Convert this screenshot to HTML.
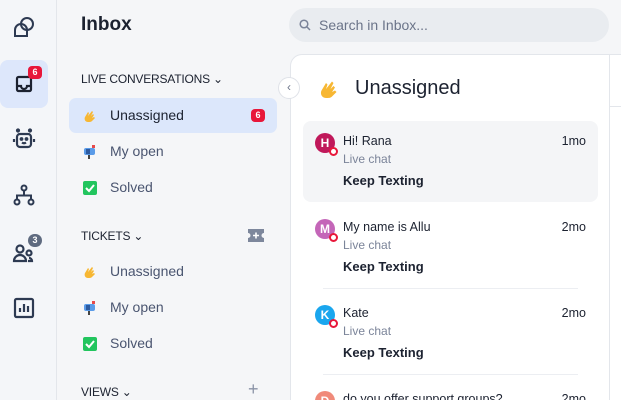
<!DOCTYPE html>
<html><head><meta charset="utf-8"><style>
*{margin:0;padding:0;box-sizing:border-box}
html{width:621px;height:400px;overflow:hidden;background:#f5f6f8}
body{width:621px;height:400px;overflow:hidden;background:#f5f6f8;font-family:"Liberation Sans",sans-serif;position:relative;color:#1c2230}
.abs{position:absolute}
.rail{left:0;top:0;width:57px;height:400px;background:#f4f6f9;border-right:1px solid #e3e6eb}
.ic{position:absolute;left:12px;width:24px;height:24px}
.mid{left:57px;top:0;width:233px;height:400px;background:#f5f6f8}
.sec{position:absolute;left:24px;font-size:12px;color:#1c2230;letter-spacing:-.2px}
.item{position:absolute;left:12px;width:208px;height:35px;border-radius:7px;font-size:14px;color:#4a5570}
.item span{position:absolute;left:41px;top:9px}
.item svg{position:absolute;left:13px;top:10px}
.badge{background:#e8173a;color:#fff;font-size:9px;font-weight:bold;border-radius:4px;text-align:center;line-height:13px}
.card{left:290px;top:54px;width:331px;height:346px;background:#fff;border-top:1px solid #e3e6eb;border-left:1px solid #e3e6eb;border-top-left-radius:12px}
.conv{position:absolute;left:12px;width:295px;height:81px;border-radius:8px}
.av{position:absolute;left:12px;top:12px;width:20px;height:20px;border-radius:50%;color:#fff;font-size:12px;font-weight:bold;text-align:center;line-height:20px}
.av i{position:absolute;right:-3px;bottom:-3px;width:9px;height:9px;border-radius:50%;background:#fff;border:2.5px solid #e8173a}
.nm{position:absolute;left:40px;top:13px;font-size:12.5px;color:#1c2230}
.tm{position:absolute;right:12px;top:13px;font-size:12.5px;color:#1c2230}
.lc{position:absolute;left:40px;top:31px;font-size:12px;color:#7b8499}
.kt{position:absolute;left:40px;top:52px;font-size:13px;font-weight:bold;color:#1c2230}
.sep{position:absolute;left:32px;width:255px;height:1px;background:#eceef2}
</style></head><body>
<div class="abs rail">
 <svg class="ic" style="top:15px" viewBox="0 0 24 24" fill="none" stroke="#2d3a52" stroke-width="2"><circle cx="15" cy="9" r="6"/><path d="M3 21v-6a6 6 0 0 1 12 0v6z"/></svg>
 <div class="abs" style="left:0;top:60px;width:48px;height:48px;background:#dde7fb;border-radius:8px"></div>
 <svg class="ic" style="top:72px" viewBox="0 0 24 24" fill="none" stroke="#1c2230" stroke-width="2.2"><rect x="5" y="5" width="14" height="14" rx="1.5"/><path d="M5 14h4a3 3 0 0 0 6 0h4"/></svg>
 <div class="abs badge" style="left:28px;top:66px;width:14px;height:13px">6</div>
 <svg class="ic" style="top:127px" viewBox="0 0 24 24" fill="none" stroke="#2d3a52" stroke-width="2.2"><rect x="5" y="7" width="14" height="13" rx="3"/><circle cx="6" cy="3.5" r="1" fill="#2d3a52"/><circle cx="18" cy="3.5" r="1" fill="#2d3a52"/><circle cx="9.5" cy="12" r=".8" fill="#2d3a52"/><circle cx="14.5" cy="12" r=".8" fill="#2d3a52"/><path d="M10 15.5q2 1.5 4 0M2 12v3M22 12v3"/></svg>
 <svg class="ic" style="top:183px" viewBox="0 0 24 24" fill="none" stroke="#2d3a52" stroke-width="2"><circle cx="12" cy="5" r="2.5"/><circle cx="5" cy="19" r="2.5"/><circle cx="19" cy="19" r="2.5"/><path d="M12 7.5v5M5 16.5v-4h14v4"/></svg>
 <svg class="ic" style="top:240px" viewBox="0 0 24 24" fill="none" stroke="#2d3a52" stroke-width="2.2"><circle cx="8" cy="9" r="3.5"/><path d="M2 21a6 6 0 0 1 12 0z"/><circle cx="17" cy="13" r="2.5"/><path d="M17 18a3 3 0 0 1 3 3h-4"/></svg>
 <div class="abs badge" style="left:28px;top:234px;width:14px;height:13px;background:#5f6b80;border-radius:7px">3</div>
 <svg class="ic" style="top:296px" viewBox="0 0 24 24" fill="none" stroke="#2d3a52" stroke-width="2.2"><rect x="3" y="3" width="18" height="18" rx="1.5"/><path d="M8 16v-4M12 16V8M16 16v-6"/></svg>
</div>
<div class="abs mid">
 <div class="abs" style="left:24px;top:14px;font-size:19px;font-weight:bold;color:#1c2230">Inbox</div>
 <div class="sec" style="top:72px">LIVE CONVERSATIONS ⌄</div>
 <div class="item" style="top:98px;background:#dce7fb;color:#1c2230"><svg width="16" height="16" viewBox="0 0 16 16"><path d="M6 14c-3 0-4-3-3-5l3-5 1 1-1 3 4-5 1 1-2 4 2-2 1 1-2 3 2-1 1 1-3 3c-1 1-2 1-4 1z" fill="#f7b733"/></svg><span>Unassigned</span><div class="abs badge" style="left:182px;top:11px;width:14px;height:13px">6</div></div>
 <div class="item" style="top:134px"><svg width="16" height="16" viewBox="0 0 16 16"><rect x="2" y="4" width="11" height="7" rx="2" fill="#5a9be8"/><rect x="4" y="5" width="4" height="5" fill="#2c5aa0"/><rect x="6" y="11" width="2" height="4" fill="#444"/><rect x="10" y="1" width="3" height="3" fill="#e84a4a"/></svg><span>My open</span></div>
 <div class="item" style="top:170px"><svg width="16" height="16" viewBox="0 0 16 16"><rect x="1" y="1" width="14" height="14" rx="2" fill="#22c55e"/><path d="M4 8l3 3 5-6" stroke="#fff" stroke-width="2" fill="none"/></svg><span>Solved</span></div>
 <div class="sec" style="top:229px">TICKETS ⌄</div>
 <svg class="abs" style="left:191px;top:229px" width="16" height="13" viewBox="0 0 16 13"><path d="M0 0h16v4a2.5 2.5 0 0 0 0 5v4H0V9a2.5 2.5 0 0 0 0-5z" fill="#7d879c"/><path d="M8 3.5v6M5 6.5h6" stroke="#fff" stroke-width="1.6"/></svg>
 <div class="item" style="top:254px"><svg width="16" height="16" viewBox="0 0 16 16"><path d="M6 14c-3 0-4-3-3-5l3-5 1 1-1 3 4-5 1 1-2 4 2-2 1 1-2 3 2-1 1 1-3 3c-1 1-2 1-4 1z" fill="#f7b733"/></svg><span>Unassigned</span></div>
 <div class="item" style="top:290px"><svg width="16" height="16" viewBox="0 0 16 16"><rect x="2" y="4" width="11" height="7" rx="2" fill="#5a9be8"/><rect x="4" y="5" width="4" height="5" fill="#2c5aa0"/><rect x="6" y="11" width="2" height="4" fill="#444"/><rect x="10" y="1" width="3" height="3" fill="#e84a4a"/></svg><span>My open</span></div>
 <div class="item" style="top:326px"><svg width="16" height="16" viewBox="0 0 16 16"><rect x="1" y="1" width="14" height="14" rx="2" fill="#22c55e"/><path d="M4 8l3 3 5-6" stroke="#fff" stroke-width="2" fill="none"/></svg><span>Solved</span></div>
 <div class="sec" style="top:385px">VIEWS ⌄</div>
 <div class="abs" style="left:191px;top:379px;font-size:18px;color:#8a93a6">+</div>
</div>
<div class="abs" style="left:289px;top:8px;width:320px;height:34px;background:#e9ecf0;border-radius:17px">
 <svg class="abs" style="left:10px;top:11px" width="12" height="12" viewBox="0 0 12 12" fill="none" stroke="#7b8499" stroke-width="1.5"><circle cx="5" cy="5" r="3.8"/><path d="M8 8l3 3"/></svg>
 <div class="abs" style="left:30px;top:9px;font-size:14px;color:#6b7489">Search in Inbox...</div>
</div>
<div class="abs card">
 <div class="abs" style="left:318px;top:0;width:1px;height:346px;background:#e3e6eb"></div>
 <div class="abs" style="left:319px;top:51px;width:12px;height:1px;background:#e3e6eb"></div>
 <svg class="abs" style="left:26px;top:22px" width="24" height="24" viewBox="0 0 16 16"><path d="M6 14c-3 0-4-3-3-5l3-5 1 1-1 3 4-5 1 1-2 4 2-2 1 1-2 3 2-1 1 1-3 3c-1 1-2 1-4 1z" fill="#f7b733"/></svg>
 <div class="abs" style="left:64px;top:22px;font-size:20px;color:#1c2230">Unassigned</div>
 <div class="conv" style="top:66px;background:#f4f5f7"><div class="av" style="background:#c0185a">H<i></i></div><div class="nm">Hi! Rana</div><div class="tm">1mo</div><div class="lc">Live chat</div><div class="kt">Keep Texting</div></div>
 <div class="conv" style="top:152px"><div class="av" style="background:#c466b8">M<i></i></div><div class="nm">My name is Allu</div><div class="tm">2mo</div><div class="lc">Live chat</div><div class="kt">Keep Texting</div></div>
 <div class="sep" style="top:233px"></div>
 <div class="conv" style="top:238px"><div class="av" style="background:#1aa6ee">K<i></i></div><div class="nm">Kate</div><div class="tm">2mo</div><div class="lc">Live chat</div><div class="kt">Keep Texting</div></div>
 <div class="sep" style="top:319px"></div>
 <div class="conv" style="top:324px"><div class="av" style="background:#f08a7a">D<i></i></div><div class="nm">do you offer support groups?</div><div class="tm">2mo</div></div>
</div>
<div class="abs" style="left:278px;top:77px;width:22px;height:22px;border-radius:50%;background:#fff;border:1px solid #dfe2e8;font-size:12px;color:#6b7489;text-align:center;line-height:19px">‹</div>
</body></html>
